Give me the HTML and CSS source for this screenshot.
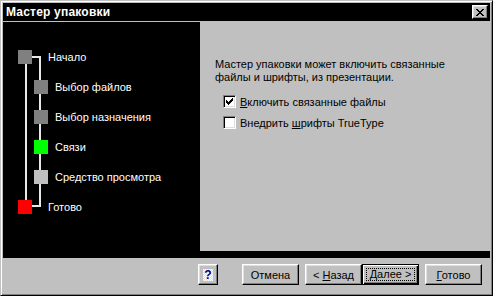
FILE: index.html
```html
<!DOCTYPE html>
<html lang="ru">
<head>
<meta charset="utf-8">
<title>Мастер упаковки</title>
<link rel="stylesheet" href="styles.css">
</head>
<body>
<div class="window">
  <div class="titlebar">
    <span class="title">Мастер упаковки</span>
    <button class="close" aria-label="Закрыть">
      <svg width="8" height="7" viewBox="0 0 8 7" shape-rendering="crispEdges">
        <path d="M0 0h2v1H0zM6 0h2v1H6zM1 1h2v1H1zM5 1h2v1H5zM2 2h4v1H2zM3 3h2v1H3zM2 4h4v1H2zM1 5h2v1H1zM5 5h2v1H5zM0 6h2v1H0zM6 6h2v1H6z" fill="#000"/>
      </svg>
    </button>
  </div>
  <div class="main">
    <div class="steps">
      <div class="line line-left"></div>
      <div class="line line-right"></div>
      <div class="line line-top"></div>
      <div class="line line-bottom"></div>
      <div class="step outer"><span class="sq gray"></span><span class="label">Начало</span></div>
      <div class="step inner"><span class="sq gray"></span><span class="label">Выбор файлов</span></div>
      <div class="step inner"><span class="sq gray"></span><span class="label">Выбор назначения</span></div>
      <div class="step inner"><span class="sq green"></span><span class="label">Связи</span></div>
      <div class="step inner"><span class="sq light"></span><span class="label">Средство просмотра</span></div>
      <div class="step outer"><span class="sq red"></span><span class="label">Готово</span></div>
    </div>
    <div class="right">
      <div class="panel">
        <p class="intro">Мастер упаковки может включить связанные<br>файлы и шрифты, из презентации.</p>
        <div class="check">
          <span class="box">
            <svg width="7" height="7" viewBox="0 0 7 7" shape-rendering="crispEdges">
              <path d="M0 2h1v3H0zM1 3h1v3H1zM2 4h1v3H2zM3 3h1v3H3zM4 2h1v3H4zM5 1h1v3H5zM6 0h1v3H6z" fill="#000"/>
            </svg>
          </span>
          <span><u>В</u>ключить связанные файлы</span>
        </div>
        <div class="check">
          <span class="box"></span>
          <span>Внедрить <u>ш</u>рифты TrueType</span>
        </div>
      </div>
    </div>
  </div>
  <div class="buttons">
    <button class="btn help"><span class="helpicon">?</span></button>
    <button class="btn"><span>Отмена</span></button>
    <button class="btn gap-left"><span>&lt; <u>Н</u>азад</span></button>
    <button class="btn default"><span class="focus"><u>Д</u>алее &gt;</span></button>
    <button class="btn gap-left"><span><u>Г</u>отово</span></button>
  </div>
</div>
</body>
</html>
```
FILE: styles.css
```css
* { box-sizing: border-box; }
html, body { margin: 0; padding: 0; }
body {
  width: 493px;
  height: 296px;
  background: #c0c0c0;
  font-family: "Liberation Sans", Arial, sans-serif;
  font-size: 11px;
}
.window {
  width: 493px;
  height: 296px;
  background: #c0c0c0;
  border: 1px solid;
  border-color: #c0c0c0 #000 #000 #c0c0c0;
  box-shadow: inset 1px 1px #fff, inset -1px -1px #808080;
  padding: 2px;
  display: flex;
  flex-direction: column;
}
.titlebar {
  height: 18px;
  margin-bottom: 1px;
  background: #000;
  color: #fff;
  display: flex;
  align-items: center;
  justify-content: space-between;
  padding: 0 2px 0 3px;
}
.title {
  font-weight: bold;
  font-size: 12px;
  letter-spacing: 0.2px;
}
.close {
  width: 16px;
  height: 14px;
  padding: 0;
  margin: 0;
  background: #c0c0c0;
  border: 1px solid;
  border-color: #fff #000 #000 #fff;
  box-shadow: inset -1px -1px #808080, inset 1px 1px #dfdfdf;
  display: flex;
  align-items: center;
  justify-content: center;
}
.close svg { display: block; margin-left: -1px; }
.main {
  height: 236px;
  display: flex;
}
.steps {
  position: relative;
  width: 197px;
  background: #000;
  padding-top: 20px;
}
.step {
  height: 30px;
  display: flex;
  align-items: center;
  color: #fff;
  position: relative;
}
.step.outer { padding-left: 15px; }
.step.outer .sq { margin-right: 16px; }
.step.inner { padding-left: 31px; }
.step.inner .sq { margin-right: 7px; }
.sq {
  width: 14px;
  height: 14px;
  flex: none;
}
.gray { background: #808080; }
.green { background: #00ff00; }
.light { background: #c0c0c0; }
.red { background: #ff0000; }
.label { white-space: nowrap; }
.line { position: absolute; background: #e8e8e8; }
.line-left { left: 22px; top: 42px; width: 2px; height: 136px; }
.line-right { left: 36px; top: 34px; width: 2px; height: 151px; }
.line-top { left: 29px; top: 34px; width: 9px; height: 2px; }
.line-bottom { left: 29px; top: 183px; width: 9px; height: 2px; }
.right {
  flex: 1;
  background: #000;
  padding-bottom: 7px;
  display: flex;
}
.panel {
  flex: 1;
  background: #c0c0c0;
  padding: 36px 0 0 15px;
  color: #000;
}
.intro {
  margin: 0 0 7px;
  line-height: 13px;
}
.check {
  display: flex;
  align-items: center;
  height: 21px;
  padding-left: 8px;
  gap: 4px;
}
.box {
  width: 13px;
  height: 13px;
  background: #fff;
  border: 1px solid;
  border-color: #808080 #fff #fff #808080;
  box-shadow: inset 1px 1px #000, inset -1px -1px #dfdfdf;
  display: flex;
  align-items: center;
  justify-content: center;
}
.box svg { display: block; }
.buttons {
  flex: 1;
  display: flex;
  align-items: flex-start;
  padding: 6px 8px 0 0;
  justify-content: flex-end;
}
.btn {
  height: 21px;
  width: 57px;
  padding: 0;
  margin: 0;
  background: #c0c0c0;
  font-family: "Liberation Sans", Arial, sans-serif;
  font-size: 11px;
  color: #000;
  border: 1px solid;
  border-color: #fff #000 #000 #fff;
  box-shadow: inset -1px -1px #808080, inset 1px 1px #dfdfdf;
  display: flex;
  align-items: center;
  justify-content: center;
  white-space: pre;
}
.btn.help {
  width: 20px;
  margin-right: 24px;
}
.helpicon {
  width: 10px;
  height: 12px;
  display: flex;
  align-items: center;
  justify-content: center;
  font-weight: bold;
  font-size: 12px;
  color: #000080;
  background: repeating-conic-gradient(#ffff00 0 25%, #ffffff 0 50%) 0 0 / 2px 2px;
  line-height: 12px;
}
.gap-left { margin-left: 6px; }
.btn.default {
  border-color: #000;
  box-shadow: inset 1px 1px #fff, inset -1px -1px #000, inset -2px -2px #808080;
}
.focus {
  border: 1px dotted #000;
  padding: 0 3px;
  line-height: 11px;
}
u { text-decoration-thickness: 1px; text-underline-offset: 1px; }
```
